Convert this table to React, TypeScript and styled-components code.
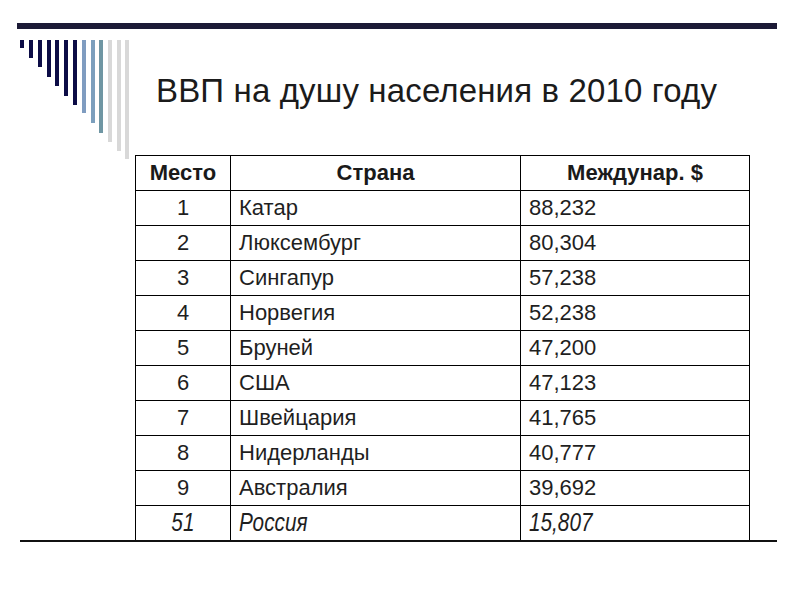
import React from "react";
import styled, { createGlobalStyle } from "styled-components";

const GlobalStyle = createGlobalStyle`
  html, body {
    margin: 0;
    padding: 0;
    background: #ffffff;
  }
  body {
    font-family: "Liberation Sans", Arial, sans-serif;
    color: #151515;
  }
`;

interface Row {
  place: string;
  country: string;
  value: string;
  highlight?: boolean;
}

const rows: Row[] = [
  { place: "1", country: "Катар", value: "88,232" },
  { place: "2", country: "Люксембург", value: "80,304" },
  { place: "3", country: "Сингапур", value: "57,238" },
  { place: "4", country: "Норвегия", value: "52,238" },
  { place: "5", country: "Бруней", value: "47,200" },
  { place: "6", country: "США", value: "47,123" },
  { place: "7", country: "Швейцария", value: "41,765" },
  { place: "8", country: "Нидерланды", value: "40,777" },
  { place: "9", country: "Австралия", value: "39,692" },
  { place: "51", country: "Россия", value: "15,807", highlight: true },
];

// x offset, length, colour of each stripe in the corner ornament
const stripes: [number, number, string][] = [
  [0, 8, "#0c0c46"],
  [9, 18, "#0c0c46"],
  [18, 27, "#0c0c46"],
  [27, 37, "#0c0c46"],
  [35, 46, "#0c0c46"],
  [44, 56, "#0c0c46"],
  [53, 65, "#0c0c46"],
  [62, 73, "#7f9cc0"],
  [71, 83, "#7c9fbd"],
  [79, 93, "#6f96a3"],
  [88, 102, "#d8d8d8"],
  [97, 111, "#d8d8d8"],
  [105, 119, "#d8d8d8"],
];

const App: React.FC = () => {
  return (
    <>
      <GlobalStyle />
      <Slide>
        <TopRule />
        <Body>
          <Ornament width="110" height="120" viewBox="0 0 110 120">
            {stripes.map(([x, h, c], i) => (
              <rect key={i} x={x} y={0} width={4} height={h} fill={c} />
            ))}
          </Ornament>
          <Content>
            <Title>ВВП на душу населения в 2010 году</Title>
            <Table>
              <colgroup>
                <col style={{ width: 95 }} />
                <col style={{ width: 290 }} />
                <col style={{ width: 229 }} />
              </colgroup>
              <thead>
                <tr>
                  <HeadCell>Место</HeadCell>
                  <HeadCell>Страна</HeadCell>
                  <HeadCell>Междунар. $</HeadCell>
                </tr>
              </thead>
              <tbody>
                {rows.map((r) => (
                  <tr key={r.place}>
                    <Cell align="center">
                      <CellText highlight={r.highlight} align="center">{r.place}</CellText>
                    </Cell>
                    <Cell>
                      <CellText highlight={r.highlight}>{r.country}</CellText>
                    </Cell>
                    <Cell>
                      <CellText highlight={r.highlight}>{r.value}</CellText>
                    </Cell>
                  </tr>
                ))}
              </tbody>
            </Table>
          </Content>
        </Body>
        <BottomRule />
      </Slide>
    </>
  );
};

export default App;

const Slide = styled.div`
  width: 800px;
  height: 600px;
  padding-top: 23px;
  box-sizing: border-box;
  display: flex;
  flex-direction: column;
  overflow: hidden;
`;

const TopRule = styled.div`
  margin-left: 17px;
  width: 760px;
  height: 6px;
  background: #1c1a36;
`;

const Body = styled.div`
  display: flex;
  align-items: flex-start;
  margin-top: 11px;
  padding-left: 20px;
`;

const Ornament = styled.svg`
  display: block;
  flex: none;
`;

const Content = styled.div`
  margin-left: 5px;
  display: flex;
  flex-direction: column;
`;

const Title = styled.h1`
  margin: 0;
  height: 115px;
  box-sizing: border-box;
  padding: 32px 0 0 21px;
  font-size: 33px;
  line-height: 38px;
  font-weight: normal;
  letter-spacing: 0.15px;
  color: #1b1b1b;
  white-space: nowrap;
`;

const Table = styled.table`
  width: 614px;
  border-collapse: collapse;
  table-layout: fixed;
  font-size: 22px;
  border-bottom: 2px solid #000;
`;

const HeadCell = styled.th`
  height: 35px;
  padding: 0;
  border: 1px solid #000;
  font-weight: bold;
  text-align: center;
  color: #1a1a1a;
  box-sizing: border-box;
`;

interface CellProps {
  align?: "left" | "center";
}

const Cell = styled.td<CellProps>`
  height: 35px;
  padding: 0 0 0 ${(p) => (p.align === "center" ? "0" : "8px")};
  border: 1px solid #000;
  text-align: ${(p) => p.align ?? "left"};
  color: #1f1f1f;
  box-sizing: border-box;
  line-height: 1;
`;

interface CellTextProps {
  highlight?: boolean;
  align?: "left" | "center";
}

// the last row (Russia) is set in a condensed italic
const CellText = styled.span<CellTextProps>`
  display: inline-block;
  font-style: ${(p) => (p.highlight ? "italic" : "normal")};
  font-size: ${(p) => (p.highlight ? "25px" : "22px")};
  transform: ${(p) => (p.highlight ? "scaleX(0.83)" : "none")};
  transform-origin: ${(p) => (p.align === "center" ? "center" : "left")} center;
`;

const BottomRule = styled.div`
  margin-left: 20px;
  margin-top: -2px;
  width: 757px;
  height: 2px;
  background: #111;
`;
